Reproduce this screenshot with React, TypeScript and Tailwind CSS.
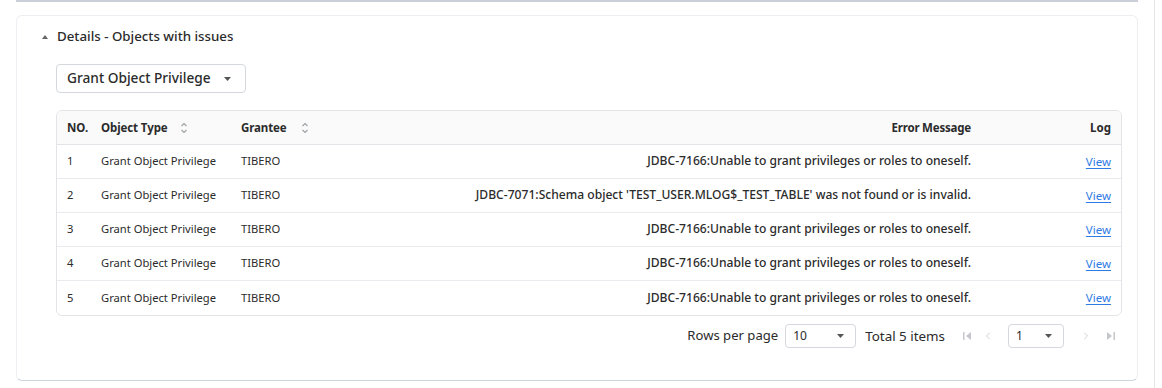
import { ChevronLeft, ChevronRight } from "lucide-react";

const rows = [
  { no: 1, type: "Grant Object Privilege", grantee: "TIBERO", msg: "JDBC-7166:Unable to grant privileges or roles to oneself." },
  { no: 2, type: "Grant Object Privilege", grantee: "TIBERO", msg: "JDBC-7071:Schema object 'TEST_USER.MLOG$_TEST_TABLE' was not found or is invalid." },
  { no: 3, type: "Grant Object Privilege", grantee: "TIBERO", msg: "JDBC-7166:Unable to grant privileges or roles to oneself." },
  { no: 4, type: "Grant Object Privilege", grantee: "TIBERO", msg: "JDBC-7166:Unable to grant privileges or roles to oneself." },
  { no: 5, type: "Grant Object Privilege", grantee: "TIBERO", msg: "JDBC-7166:Unable to grant privileges or roles to oneself." },
];

function Caret() {
  return (
    <svg width="7" height="4" viewBox="0 0 7 4" className="fill-[#555]">
      <path d="M0 0h7L3.5 4z" />
    </svg>
  );
}

function SortIcon() {
  return (
    <svg width="8" height="12" viewBox="0 0 8 12" fill="none" className="stroke-[#9aa0a6]" strokeWidth="1.1">
      <path d="M1.5 4L4 1.5L6.5 4" />
      <path d="M1.5 8L4 10.5L6.5 8" />
    </svg>
  );
}

function FirstIcon() {
  return (
    <svg width="9" height="8" viewBox="0 0 9 8" className="fill-[#c4c7cc]">
      <rect x="0" y="0" width="1.5" height="8" />
      <path d="M8 0v8L3 4z" />
    </svg>
  );
}

function LastIcon() {
  return (
    <svg width="9" height="8" viewBox="0 0 9 8" className="fill-[#c4c7cc]">
      <rect x="7.5" y="0" width="1.5" height="8" />
      <path d="M1 0v8l5-4z" />
    </svg>
  );
}

export default function App() {
  return (
    <div className="w-[1162px] h-[388px] bg-white relative overflow-hidden font-['Noto_Sans',sans-serif] text-[#2b2b2b]">
      <div className="absolute right-[7px] top-0 bottom-0 w-px bg-[#e4e6ea]" />
      <div className="ml-4 w-[1122px] h-[2px] bg-[#c9ced8]" />
      <div className="ml-4 mt-[13px] w-[1122px] h-[366px] rounded-md border border-[#eceef1] border-b-[#cfd3da] pl-[24px] pr-[16px] pt-[12px]">
        <div className="flex items-center gap-[9px] h-[17px]">
          <svg width="6" height="4" viewBox="0 0 6 4" className="fill-[#666] ml-[1px]">
            <path d="M0 4h6L3 0z" />
          </svg>
          <span className="text-[13.3px] font-medium">Details - Objects with issues</span>
        </div>
        <div className="mt-[19px] ml-[15px] w-[190px] h-[29px] rounded border border-[#d5d8dd] flex items-center justify-between pl-[10px] pr-[14px]">
          <span className="text-[13.7px] font-medium">Grant Object Privilege</span>
          <Caret />
        </div>
        <div className="mt-[17px] ml-[15px] w-[1066px] rounded-md border border-[#e2e4e8] overflow-hidden">
          <div className="flex items-center h-[34px] bg-[#fafafa] border-b border-[#e2e4e8] text-[11.5px] font-bold">
            <div className="w-[44px] pl-[10px]">NO.</div>
            <div className="w-[140px] flex items-center gap-[12px]">
              <span className="tracking-[-0.1px]">Object Type</span>
              <SortIcon />
            </div>
            <div className="w-[140px] flex items-center gap-[14px]">
              <span className="tracking-[-0.1px]">Grantee</span>
              <SortIcon />
            </div>
            <div className="flex-1 text-right pr-[10px] tracking-[-0.2px]">Error Message</div>
            <div className="w-[140px] text-right pr-[10px]">Log</div>
          </div>
          {rows.map((r, i) => (
            <div
              key={r.no}
              className={`flex items-center h-[34px] text-[11.2px] ${i < rows.length - 1 ? "border-b border-[#e9ebee]" : ""}`}
            >
              <div className="w-[44px] pl-[10px]">{r.no}</div>
              <div className="w-[140px]">{r.type}</div>
              <div className="w-[140px]">{r.grantee}</div>
              <div className="flex-1 text-right pr-[10px] text-[12.1px] font-medium">{r.msg}</div>
              <div className="w-[140px] text-right pr-[10px] text-[11.5px]">
                <a className="text-[#2f7be5] underline underline-offset-2 cursor-pointer">View</a>
              </div>
            </div>
          ))}
        </div>
        <div className="mt-[8px] mr-[6px] flex items-center justify-end h-[24px]">
          <span className="text-[13.1px] mr-[7px]">Rows per page</span>
          <div className="w-[71px] h-[24px] rounded border border-[#d5d8dd] flex items-center justify-between pl-[7px] pr-[11px] text-[12px]">
            <span>10</span>
            <Caret />
          </div>
          <span className="text-[13.4px] ml-[9px] mr-[18px]">Total 5 items</span>
          <FirstIcon />
          <ChevronLeft size={12} className="ml-[10px] text-[#c4c7cc]" strokeWidth={1.6} />
          <div className="ml-[14px] w-[56px] h-[24px] rounded border border-[#d5d8dd] flex items-center justify-between pl-[7px] pr-[11px] text-[12px]">
            <span>1</span>
            <Caret />
          </div>
          <ChevronRight size={12} className="ml-[16px] text-[#c4c7cc]" strokeWidth={1.6} />
          <div className="ml-[14px]">
            <LastIcon />
          </div>
        </div>
      </div>
    </div>
  );
}
